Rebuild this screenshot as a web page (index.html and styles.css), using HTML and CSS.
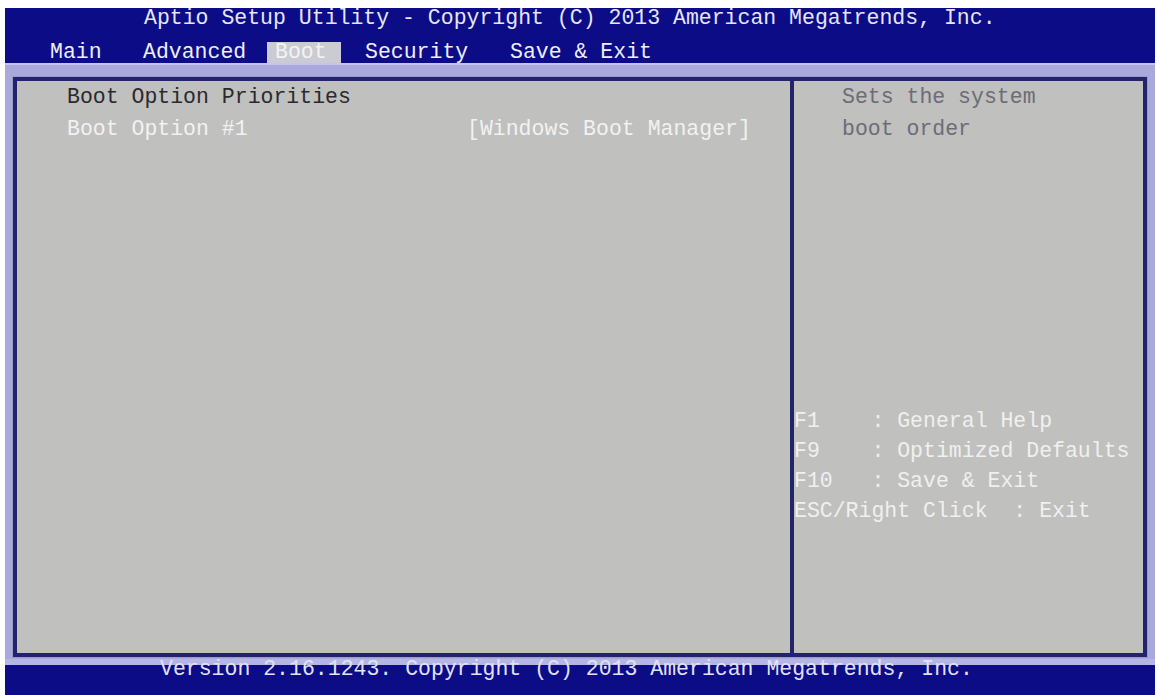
FILE: index.html
```html
<!DOCTYPE html>
<html lang="en">
<head>
<meta charset="utf-8">
<title>Aptio Setup Utility</title>
<link rel="stylesheet" href="styles.css">
</head>
<body>
<div class="screen">
  <header class="topbar">
    <div class="title">Aptio Setup Utility - Copyright (C) 2013 American Megatrends, Inc.</div>
    <nav class="menu">
      <span class="tab tab-main">Main</span>
      <span class="tab tab-adv">Advanced</span>
      <span class="tab tab-boot">Boot</span>
      <span class="tab tab-sec">Security</span>
      <span class="tab tab-save">Save &amp; Exit</span>
    </nav>
  </header>
  <main class="frame">
    <div class="panel">
      <section class="left">
        <div class="row heading">Boot Option Priorities</div>
        <div class="row option"><span class="label">Boot Option #1</span><span class="value">[Windows Boot Manager]</span></div>
      </section>
      <aside class="right">
        <div class="help">
          <div class="row">Sets the system</div>
          <div class="row">boot order</div>
        </div>
        <div class="keys">
          <div class="key">F1    : General Help</div>
          <div class="key">F9    : Optimized Defaults</div>
          <div class="key">F10   : Save &amp; Exit</div>
          <div class="key">ESC/Right Click  : Exit</div>
        </div>
      </aside>
    </div>
  </main>
  <footer class="footer">Version 2.16.1243. Copyright (C) 2013 American Megatrends, Inc.</footer>
</div>
</body>
</html>
```
FILE: styles.css
```css
html, body {
  margin: 0;
  padding: 0;
  background: #ffffff;
}
body {
  font-family: "Liberation Mono", "DejaVu Sans Mono", monospace;
  font-size: 21.5px;
}
.screen {
  margin: 8px 0 0 5px;
  width: 1150px;
  height: 687px;
  background: #0c0c86;
  display: flex;
  flex-direction: column;
}
.topbar {
  height: 55px;
  flex: none;
}
.title {
  height: 24px;
  line-height: 24px;
  margin-top: -2px;
  padding-left: 139px;
  color: #e6e6f6;
  white-space: pre;
}
.menu {
  margin-top: 12px;
  height: 21px;
  line-height: 21px;
  padding-left: 45px;
  display: flex;
  color: #eeeefc;
  white-space: pre;
}
.tab-main { margin-right: 41.4px; }
.tab-adv { margin-right: 20.8px; }
.tab-boot {
  padding: 0 14.4px 0 8px;
  background: #cbcbd3;
  color: #f3f3f3;
}
.tab-sec { margin-left: 24px; margin-right: 41.8px; }
.frame {
  flex: 1;
  background: #a9a9dc;
  padding: 14px 8px 2px 8px;
  display: flex;
  box-shadow: inset 0 2px 0 #c4c4ee;
}
.panel {
  flex: 1;
  display: flex;
  border: 4px solid #23236b;
  background: #c0c0be;
  box-shadow: 0 0 0 1px #9a9acc;
}
.left {
  width: 723px;
  padding-left: 50px;
  border-right: 4px solid #23236b;
}
.row {
  line-height: 32px;
  height: 32px;
  white-space: pre;
}
.heading {
  color: #2a2a2e;
}
.option {
  display: grid;
  grid-template-columns: 400px auto;
  color: #f2f2f2;
}
.right {
  flex: 1;
  display: flex;
  flex-direction: column;
}
.help {
  padding-left: 48px;
  color: #6c6c78;
}
.keys {
  margin-top: 261px;
  color: #f0f0f0;
}
.key {
  line-height: 30px;
  height: 30px;
  white-space: pre;
}
.footer {
  height: 36px;
  flex: none;
  line-height: 20px;
  padding-left: 155px;
  color: #e2e2f4;
  white-space: pre;
  background: linear-gradient(#b6b6e6 0, #b6b6e6 6px, #0c0c86 6px);
}
```
